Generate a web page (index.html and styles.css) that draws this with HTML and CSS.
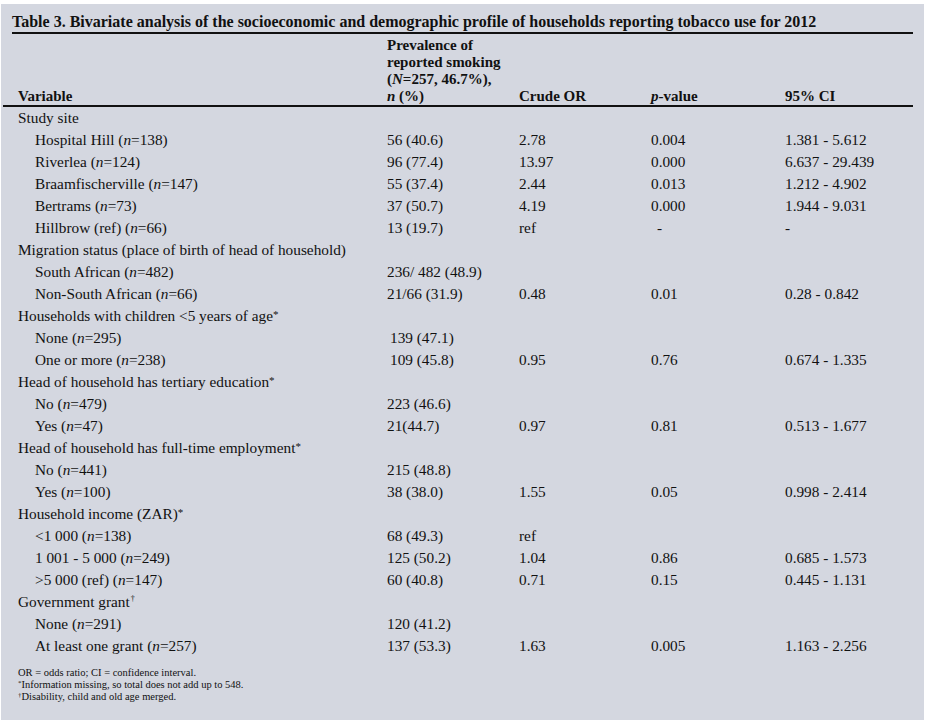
FILE: index.html
```html
<!DOCTYPE html>
<html lang="en">
<head>
<meta charset="utf-8">
<title>Table 3</title>
<link rel="stylesheet" href="styles.css">
</head>
<body>
<div class="panel">
  <div class="title">Table 3. Bivariate analysis of the socioeconomic and demographic profile of households reporting tobacco use for 2012</div>
  <table class="data">
    <colgroup>
      <col class="c1"><col class="c2"><col class="c3"><col class="c4"><col class="c5">
    </colgroup>
    <thead>
      <tr>
        <th class="first">Variable</th>
        <th>Prevalence of<br>reported smoking<br>(<i>N</i>=257, 46.7%),<br><i>n</i> (%)</th>
        <th>Crude OR</th>
        <th><i>p</i>-value</th>
        <th>95% CI</th>
      </tr>
    </thead>
    <tbody>
      <tr><td class="first">Study site</td><td></td><td></td><td></td><td></td></tr>
      <tr><td class="sub">Hospital Hill (<i>n</i>=138)</td><td>56 (40.6)</td><td>2.78</td><td>0.004</td><td>1.381 - 5.612</td></tr>
      <tr><td class="sub">Riverlea (<i>n</i>=124)</td><td>96 (77.4)</td><td>13.97</td><td>0.000</td><td>6.637 - 29.439</td></tr>
      <tr><td class="sub">Braamfischerville (<i>n</i>=147)</td><td>55 (37.4)</td><td>2.44</td><td>0.013</td><td>1.212 - 4.902</td></tr>
      <tr><td class="sub">Bertrams (<i>n</i>=73)</td><td>37 (50.7)</td><td>4.19</td><td>0.000</td><td>1.944 - 9.031</td></tr>
      <tr><td class="sub">Hillbrow (ref) (<i>n</i>=66)</td><td>13 (19.7)</td><td>ref</td><td class="dash">-</td><td>-</td></tr>
      <tr><td class="first">Migration status (place of birth of head of household)</td><td></td><td></td><td></td><td></td></tr>
      <tr><td class="sub">South African (<i>n</i>=482)</td><td>236/ 482 (48.9)</td><td></td><td></td><td></td></tr>
      <tr><td class="sub">Non-South African (<i>n</i>=66)</td><td>21/66 (31.9)</td><td>0.48</td><td>0.01</td><td>0.28 - 0.842</td></tr>
      <tr><td class="first">Households with children &lt;5 years of age<sup>*</sup></td><td></td><td></td><td></td><td></td></tr>
      <tr><td class="sub">None (<i>n</i>=295)</td><td class="shift">139 (47.1)</td><td></td><td></td><td></td></tr>
      <tr><td class="sub">One or more (<i>n</i>=238)</td><td class="shift">109 (45.8)</td><td>0.95</td><td>0.76</td><td>0.674 - 1.335</td></tr>
      <tr><td class="first">Head of household has tertiary education<sup>*</sup></td><td></td><td></td><td></td><td></td></tr>
      <tr><td class="sub">No (<i>n</i>=479)</td><td>223 (46.6)</td><td></td><td></td><td></td></tr>
      <tr><td class="sub">Yes (<i>n</i>=47)</td><td>21(44.7)</td><td>0.97</td><td>0.81</td><td>0.513 - 1.677</td></tr>
      <tr><td class="first">Head of household has full-time employment<sup>*</sup></td><td></td><td></td><td></td><td></td></tr>
      <tr><td class="sub">No (<i>n</i>=441)</td><td>215 (48.8)</td><td></td><td></td><td></td></tr>
      <tr><td class="sub">Yes (<i>n</i>=100)</td><td>38 (38.0)</td><td>1.55</td><td>0.05</td><td>0.998 - 2.414</td></tr>
      <tr><td class="first">Household income (ZAR)<sup>*</sup></td><td></td><td></td><td></td><td></td></tr>
      <tr><td class="sub">&lt;1 000 (<i>n</i>=138)</td><td>68 (49.3)</td><td>ref</td><td></td><td></td></tr>
      <tr><td class="sub">1 001 - 5 000 (<i>n</i>=249)</td><td>125 (50.2)</td><td>1.04</td><td>0.86</td><td>0.685 - 1.573</td></tr>
      <tr><td class="sub">&gt;5 000 (ref) (<i>n</i>=147)</td><td>60 (40.8)</td><td>0.71</td><td>0.15</td><td>0.445 - 1.131</td></tr>
      <tr><td class="first">Government grant<sup class="dagger">†</sup></td><td></td><td></td><td></td><td></td></tr>
      <tr><td class="sub">None (<i>n</i>=291)</td><td>120 (41.2)</td><td></td><td></td><td></td></tr>
      <tr><td class="sub">At least one grant (<i>n</i>=257)</td><td>137 (53.3)</td><td>1.63</td><td>0.005</td><td>1.163 - 2.256</td></tr>
    </tbody>
  </table>
  <div class="notes">
    <p>OR = odds ratio; CI = confidence interval.</p>
    <p><sup>*</sup>Information missing, so total does not add up to 548.</p>
    <p><sup>†</sup>Disability, child and old age merged.</p>
  </div>
</div>
</body>
</html>
```

FILE: styles.css
```css
html, body {
  margin: 0;
  padding: 0;
  background: #ffffff;
}

body {
  font-family: "Liberation Serif", "Times New Roman", serif;
  color: #111111;
}

.panel {
  margin: 4px 5px 4px 1px;
  height: 716px;
  box-sizing: border-box;
  padding-top: 9px;
  background: #d4d7e0;
}

.title {
  margin: 0 11px;
  padding-bottom: 1px;
  border-bottom: 2px solid #111;
  font-weight: bold;
  font-size: 16px;
  line-height: 18px;
  white-space: nowrap;
}

.data {
  margin: 3px 0 0 2px;
  width: 910px;
  table-layout: fixed;
  border-collapse: collapse;
  font-size: 15.3px;
}

.c1 { width: 384px; }
.c2 { width: 132px; }
.c3 { width: 132px; }
.c4 { width: 134px; }
.c5 { width: 128px; }

.data th {
  text-align: left;
  vertical-align: bottom;
  font-weight: bold;
  font-size: 15px;
  line-height: 17px;
  padding: 0;
  border-bottom: 2px solid #111;
}

.data td {
  height: 22px;
  line-height: 22px;
  padding: 0;
  white-space: nowrap;
  vertical-align: middle;
}

.data .first {
  padding-left: 15px;
}

.data .sub {
  padding-left: 32px;
}

.data .shift {
  padding-left: 3px;
}

.data .dash {
  padding-left: 6px;
}

sup {
  font-size: 11px;
  line-height: 0;
  vertical-align: 3px;
}

.data sup.dagger {
  font-size: 8px;
  vertical-align: 6px;
  margin-left: 1px;
}

.notes {
  margin: 10px 0 0 17px;
  font-size: 10.5px;
  line-height: 12px;
}

.notes p {
  margin: 0;
}

.notes sup {
  font-size: 7px;
  vertical-align: 3px;
}
```
